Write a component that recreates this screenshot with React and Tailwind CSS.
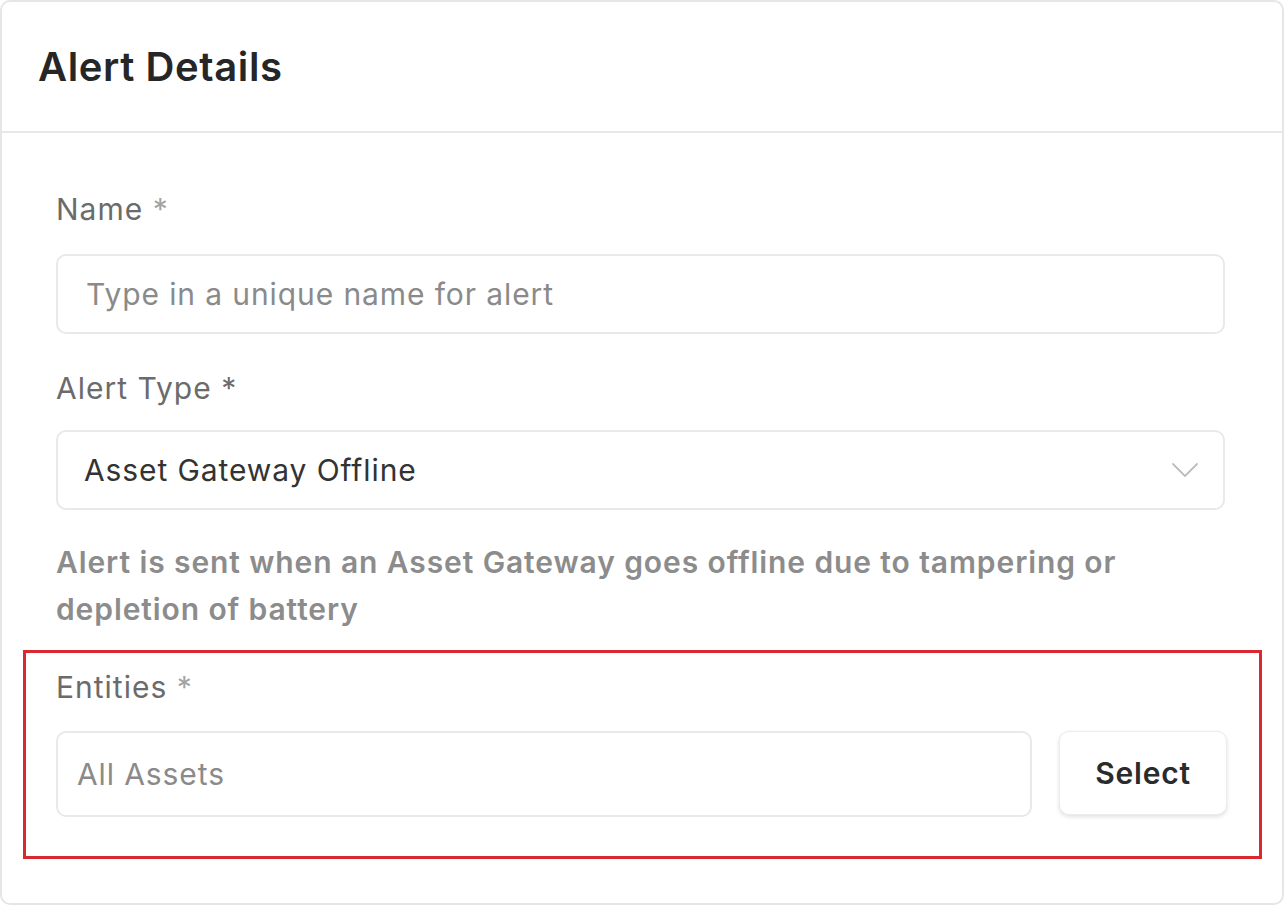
import { ChevronDown } from 'lucide-react';

export default function App() {
  return (
    <div className="w-[1285px] h-[906px] bg-white" style={{ fontFamily: 'Inter, "Noto Sans", sans-serif' }}>
      <div className="w-[1284px] h-[905px] border-2 border-[#e6e6e6] rounded-[10px] bg-white flex flex-col">
        <div className="h-[131px] flex items-center px-[36px] border-b-2 border-[#e8e8e8]">
          <h1 className="text-[40px] font-semibold text-[#262626] tracking-[0.6px]">Alert Details</h1>
        </div>

        <div className="pl-[54px] pr-[57px] pt-[58px]">
          <label className="block text-[30px] leading-[36px] tracking-[1px] text-[#6b6b6b] mb-[27px]">
            Name <span className="text-[#a3a3a3]">*</span>
          </label>
          <div className="h-[80px] border-2 border-[#e9e9e9] rounded-[10px] flex items-center px-[28px]">
            <span className="text-[30px] tracking-[0.9px] text-[#8a8a8a]">Type in a unique name for alert</span>
          </div>

          <label className="block text-[30px] leading-[36px] tracking-[1px] text-[#6b6b6b] mt-[36px] mb-[24px]">
            Alert Type <span className="text-[#6b6b6b]">*</span>
          </label>
          <div className="h-[80px] border-2 border-[#e9e9e9] rounded-[10px] flex items-center justify-between pl-[26px] pr-[14px]">
            <span className="text-[30px] tracking-[0.9px] text-[#333333]">Asset Gateway Offline</span>
            <ChevronDown className="w-[48px] h-[48px] text-[#bdbdbd]" strokeWidth={0.9} />
          </div>

          <p className="mt-[29px] text-[30px] leading-[47px] tracking-[0.9px] font-semibold text-[#8c8c8c]">
            Alert is sent when an Asset Gateway goes offline due to tampering or depletion of battery
          </p>

          <div className="mt-[17px] -ml-[33px] mr-[-37px] border-[3px] border-[#d9282f] pl-[30px] pr-[32px] pt-[16px] pb-[39px]">
            <label className="block text-[30px] leading-[36px] tracking-[1px] text-[#6b6b6b] mb-[26px]">
              Entities <span className="text-[#a3a3a3]">*</span>
            </label>
            <div className="flex gap-[27px]">
              <div className="flex-1 h-[86px] border-2 border-[#e9e9e9] rounded-[10px] flex items-center px-[19px]">
                <span className="text-[30px] tracking-[0.9px] text-[#8a8a8a]">All Assets</span>
              </div>
              <button className="w-[168px] h-[84px] rounded-[10px] bg-white border border-[#ececec] shadow-[0_2px_4px_rgba(0,0,0,0.12)] text-[30px] tracking-[0.8px] font-semibold text-[#2b2b2b]">
                Select
              </button>
            </div>
          </div>
        </div>
      </div>
    </div>
  );
}
